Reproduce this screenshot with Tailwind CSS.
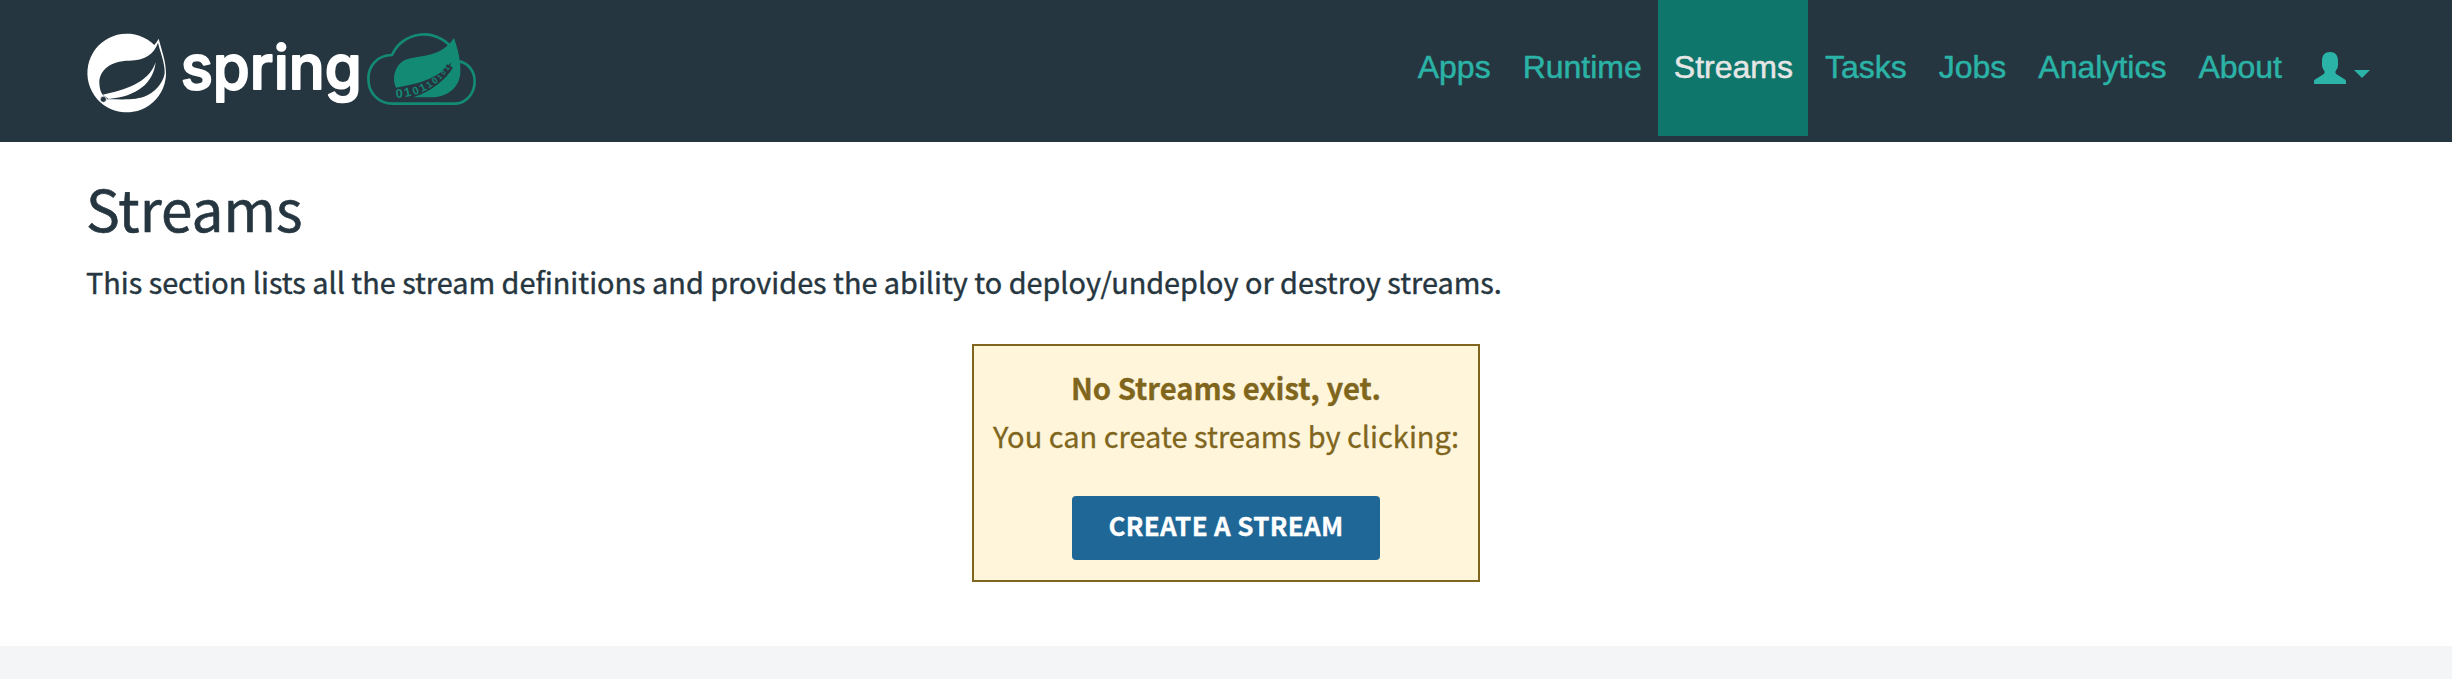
<!DOCTYPE html>
<html lang="en">
<head>
<meta charset="utf-8">
<title>Streams</title>
<script src="https://cdn.jsdelivr.net/npm/@tailwindcss/browser@4"></script>
</head>
<body class="h-[679px] overflow-hidden bg-[#f4f5f7] font-['Noto_Sans_CJK_SC',sans-serif] text-[#263640]">
<header class="flex h-[142px] items-start justify-between bg-[#263640] pr-[82px] pl-[86px]">
  <a href="#" class="mt-8" aria-label="Spring Cloud Data Flow">
    <svg class="overflow-visible" width="392" height="84" viewBox="48 36 1176 252">
      <path fill="#fff" d="M253 75A118 118 0 1 0 288 165C289 125 274 88 266 56Q261 66 253 75Z"/>
      <path fill="#263640" d="M264 68C252 103 224 121 178 122C120 122 88 152 88 188C88 203 92 216 98 224L112 238C160 238 200 242 232 226C266 209 284 176 284 157C284 124 270 96 264 68Z"/>
      <path fill="#fff" d="M98 224C165 210 235 190 257 127C250 190 200 230 116 237Z"/>
      <circle cx="100" cy="238" r="9" fill="#263640" stroke="#fff" stroke-width="2"/>
      <text x="332" y="206" textLength="543" lengthAdjust="spacingAndGlyphs" font-family="Inter" font-size="184" font-weight="500" fill="#fff" stroke="#fff" stroke-width="6" stroke-linejoin="round">spring</text>
      <g transform="translate(840 0)">
        <path fill="none" stroke="#138a74" stroke-width="8" stroke-linejoin="round" d="M302 80C256 24 158 32 126 105C82 105 55 138 55 176C55 220 86 251 128 251H318C350 248 374 220 374 184C374 154 356 130 328 124"/>
        <path fill="#138a74" d="M312 54C324 88 333 125 331 158C328 204 292 232 240 232H190C245 214 292 180 304 127C270 170 220 190 138 203C126 180 132 142 158 124C196 101 265 122 312 54Z"/>
        <path fill="none" stroke="#263640" stroke-width="20" d="M196 212C240 200 275 180 300 138"/>
        <path id="bits" fill="none" d="M138 234C205 232 265 200 306 134"/>
        <text font-family="Liberation Sans" font-size="38" font-weight="700" fill="#138a74"><textPath href="#bits" textLength="192">01<tspan font-size="33">01</tspan><tspan font-size="27">10</tspan><tspan font-size="20">101</tspan></textPath></text>
      </g>
    </svg>
  </a>
  <nav class="flex h-[136px] font-['Liberation_Sans',sans-serif] text-[32px] leading-[135px] text-[#2ab3a6] [-webkit-text-stroke:0.5px]">
    <a href="#" class="px-4">Apps</a>
    <a href="#" class="px-4">Runtime</a>
    <a href="#" class="mr-px bg-[#0f766b] pr-[15px] pl-4 text-[#e6e6e6]">Streams</a>
    <a href="#" class="px-4">Tasks</a>
    <a href="#" class="px-4">Jobs</a>
    <a href="#" class="px-4">Analytics</a>
    <a href="#" class="px-4">About</a>
    <a href="#" class="flex items-start gap-2 pt-[52px] pl-4" aria-label="User">
      <svg width="32" height="32" viewBox="0 0 32 32" fill="currentColor"><path d="M0 32V29Q0 28 1 27.500L9 22.500C11 21 11 20 10 18.500Q8 16.500 8 13V9C8 3 11 0 16 0S24 3 24 9V13Q24 16.500 22 18.500C21 20 21 21 23 22.500L31 27.500Q32 28 32 29V32Z"/></svg>
      <svg class="mt-[18px]" width="16" height="8" viewBox="0 0 16 8" fill="currentColor"><path d="M0 0H16L8 8Z"/></svg>
    </a>
  </nav>
</header>
<main class="h-[504px] bg-white px-[86px] pt-[27px]">
  <h1 class="text-[56.7px] leading-[76px] [-webkit-text-stroke:0.6px]">Streams</h1>
  <p class="mt-[17px] text-[28.83px] leading-[40px] [-webkit-text-stroke:0.4px]">This section lists all the stream definitions and provides the ability to deploy/undeploy or destroy streams.</p>
  <section class="mx-auto mt-[42px] flex h-[238px] w-[508px] flex-col items-center border-2 border-[#80661d] bg-[#fff5db] pt-[17px] text-[29px] leading-[48px] whitespace-nowrap text-[#80661d] [-webkit-text-stroke:0.3px]">
    <strong class="text-[29.2px]">No Streams exist, yet.</strong>
    <span>You can create streams by clicking:</span>
    <button class="mt-[37px] h-16 w-[308px] rounded bg-[#1f6797] pb-1.5 text-[26px] leading-[56px] font-bold tracking-[0.3px] text-white">CREATE A STREAM</button>
  </section>
</main>
</body>
</html>
